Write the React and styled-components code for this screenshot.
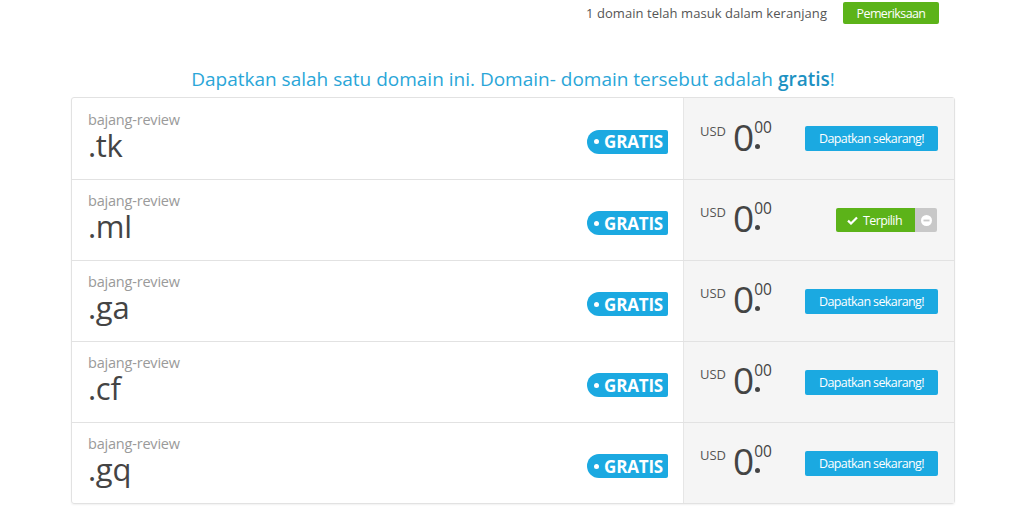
import React from "react";
import styled, { createGlobalStyle } from "styled-components";

const Global = createGlobalStyle`
  html, body { margin: 0; padding: 0; background: #fff; }
  body { font-family: "Open Sans", "Noto Sans", sans-serif; width: 1020px; height: 520px; overflow: hidden; }
`;

const Page = styled.div`
  width: 1020px;
  display: flex;
  flex-direction: column;
`;

const TopBar = styled.div`
  display: flex;
  justify-content: flex-end;
  align-items: center;
  gap: 16px;
  padding: 2px 81px 0 0;
  height: 22px;
`;

const CartText = styled.span`
  font-size: 13px;
  color: #555;
  letter-spacing: 0.05px;
`;

const Btn = styled.button`
  border: none;
  border-radius: 2px;
  color: #fff;
  font-family: "Open Sans", sans-serif;
  font-size: 12.5px;
  letter-spacing: -0.6px;
  padding: 0 10px;
  cursor: pointer;
  background: ${(p) => (p.$green ? "#5cb319" : "#1ba9e1")};
  height: ${(p) => p.$h || 25}px;
  width: ${(p) => p.$w}px;
  display: flex;
  align-items: center;
  justify-content: center;
`;

const Heading = styled.h2`
  margin: 42px 0 0 0;
  text-align: center;
  font-weight: 400;
  font-size: 19px;
  color: #2aa6d8;
  letter-spacing: 0;
  line-height: 26px;
  padding-left: 6px;
  b { font-weight: 600; color: #1d91c2; }
`;

const Table = styled.div`
  margin: 5px 0 0 71px;
  width: 884px;
  border: 1px solid #e2e2e2;
  border-radius: 3px;
  box-shadow: 0 1px 2px rgba(0,0,0,0.06);
  display: flex;
  flex-direction: column;
  box-sizing: border-box;
`;

const Row = styled.div`
  display: grid;
  grid-template-columns: 611px 1fr;
  height: 81px;
  border-top: ${(p) => (p.$first ? "none" : "1px solid #e2e2e2")};
  box-sizing: border-box;
`;

const NameCell = styled.div`
  display: flex;
  align-items: center;
  justify-content: space-between;
  padding: 0 15px 0 16px;
`;

const Name = styled.div`
  display: flex;
  flex-direction: column;
  margin-top: -6px;
`;

const Sld = styled.span`
  font-size: 14.5px;
  color: #9a9a9a;
  line-height: 18px;
  letter-spacing: -0.2px;
`;

const Tld = styled.span`
  font-size: 31px;
  color: #444;
  line-height: 32px;
  letter-spacing: -0.3px;
`;

const Badge = styled.span`
  display: flex;
  align-items: center;
  gap: 5px;
  background: #1ba9e1;
  color: #fff;
  font-weight: 700;
  font-size: 17px;
  height: 24px;
  padding: 0 5px 0 7px;
  border-radius: 12px 2px 2px 12px;
  margin-top: 6px;
  letter-spacing: -0.2px;
`;

const Dot = styled.span`
  width: 5px;
  height: 5px;
  border-radius: 50%;
  background: #fff;
`;

const PriceCell = styled.div`
  background: #f5f5f5;
  border-left: 1px solid #e6e6e6;
  display: flex;
  align-items: center;
  justify-content: space-between;
  padding: 0 16px 0 16px;
`;

const Price = styled.div`
  display: flex;
  align-items: flex-start;
  color: #444;
  margin-top: -4px;
`;

const Cur = styled.span`
  font-size: 13px;
  margin-top: 3px;
  margin-right: 7px;
  color: #555;
`;

const Big = styled.span`
  font-size: 37px;
  font-weight: 400;
  line-height: 36px;
  letter-spacing: -1px;
`;

const Decimal = styled.span`
  display: flex;
  flex-direction: column;
  align-items: flex-start;
  margin-left: 1px;
`;

const Cents = styled.span`
  font-size: 15.5px;
  line-height: 15px;
  margin-top: 1px;
`;

const DecDot = styled.span`
  width: 5px;
  height: 5px;
  border-radius: 50%;
  background: #444;
  margin-top: 9px;
  margin-left: 1px;
`;

const Selected = styled.div`
  display: flex;
  height: 24px;
  margin-right: 1px;
`;

const SelBtn = styled.span`
  background: #5cb319;
  color: #fff;
  font-size: 12.5px;
  letter-spacing: -0.6px;
  display: flex;
  align-items: center;
  gap: 5px;
  padding: 0 13px 0 11px;
  border-radius: 2px 0 0 2px;
`;

const Remove = styled.span`
  background: #c8c8c8;
  width: 22px;
  display: flex;
  align-items: center;
  justify-content: center;
  border-radius: 0 2px 2px 0;
`;

const domains = [
  { tld: ".tk" },
  { tld: ".ml", selected: true },
  { tld: ".ga" },
  { tld: ".cf" },
  { tld: ".gq" },
];

export default function App() {
  return (
    <>
      <Global />
      <Page>
        <TopBar>
          <CartText>1 domain telah masuk dalam keranjang</CartText>
          <Btn $green $h={22} $w={96}>Pemeriksaan</Btn>
        </TopBar>
        <Heading>
          Dapatkan salah satu domain ini. Domain- domain tersebut adalah <b>gratis</b>!
        </Heading>
        <Table>
          {domains.map((d, i) => (
            <Row key={d.tld} $first={i === 0}>
              <NameCell>
                <Name>
                  <Sld>bajang-review</Sld>
                  <Tld>{d.tld}</Tld>
                </Name>
                <Badge>
                  <Dot />
                  GRATIS
                </Badge>
              </NameCell>
              <PriceCell>
                <Price>
                  <Cur>USD</Cur>
                  <Big>0</Big>
                  <Decimal>
                    <Cents>00</Cents>
                    <DecDot />
                  </Decimal>
                </Price>
                {d.selected ? (
                  <Selected>
                    <SelBtn>
                      <svg width="11" height="9" viewBox="0 0 11 9">
                        <path d="M1 4.6 L4 7.5 L10 1.5" stroke="#fff" strokeWidth="2.2" fill="none" />
                      </svg>
                      Terpilih
                    </SelBtn>
                    <Remove>
                      <svg width="11" height="11" viewBox="0 0 11 11">
                        <circle cx="5.5" cy="5.5" r="5.5" fill="#fff" />
                        <rect x="2.5" y="4.6" width="6" height="1.8" fill="#c8c8c8" />
                      </svg>
                    </Remove>
                  </Selected>
                ) : (
                  <Btn $w={133}>Dapatkan sekarang!</Btn>
                )}
              </PriceCell>
            </Row>
          ))}
        </Table>
      </Page>
    </>
  );
}
